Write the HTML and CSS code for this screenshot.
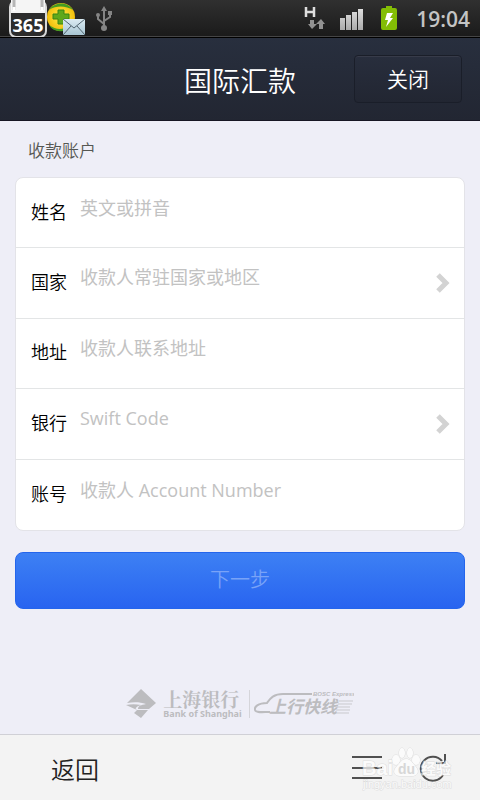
FILE: index.html
```html
<!DOCTYPE html>
<html lang="zh-CN">
<head>
<meta charset="utf-8">
<meta name="viewport" content="width=device-width, initial-scale=1">
<title>国际汇款</title>
<link rel="stylesheet" href="styles.css">
</head>
<body>
<div class="status">
  <svg class="notices" width="120" height="37" viewBox="0 0 120 37" aria-hidden="true">
    <defs>
      <linearGradient id="mail" x1="0" y1="0" x2="0" y2="1"><stop offset="0" stop-color="#dcebf2"/><stop offset="1" stop-color="#a9c6d4"/></linearGradient>
      <radialGradient id="ball"><stop offset="0" stop-color="#fff04a"/><stop offset="1" stop-color="#f2bd0c"/></radialGradient>
    </defs>
    <rect x="10" y="1" width="36" height="36" rx="6" fill="#2c2c2c" stroke="#d8d8d8" stroke-width="2"/>
    <path d="M11 0h34v13H11z" fill="#f5f5f5"/>
    <path d="M14 0v10M42 0v10" stroke="#b5b5b5" stroke-width="3"/>
    <path d="M14 7v4M42 7v4" stroke="#fff" stroke-width="3"/>
    <text x="28" y="32" class="calendar" text-anchor="middle">365</text>
    <circle cx="61" cy="17" r="14" fill="url(#ball)"/>
    <path d="M49 10C54 2 67 1 73 10C66 6 57 5 49 10zM49 25C55 29 59 30 65 28L63 31C57 32 52 30 49 25z" fill="#459d22"/>
    <path d="M58 10h6v4h5v5h-5v5h-6v-5h-5v-5h5z" fill="#5fa81b" stroke="#398415"/>
    <rect x="63" y="19" width="22" height="16" fill="url(#mail)"/>
    <path d="M63 19l11 9 11-9M63 35l8-9M85 35l-8-9" fill="none" stroke="#526570"/>
    <g fill="none" stroke="#858585" stroke-width="2"><path d="M104 29V9M104 24l-6-5v-4M104 21l6-4v-3"/></g>
    <g fill="#858585"><path d="M101 11l3-5 3 5z"/><circle cx="104" cy="28" r="3"/><circle cx="98" cy="15" r="2"/><path d="M108 11h4v4h-4z"/></g>
  </svg>
  <div class="system">
    <svg width="96" height="37" viewBox="302 0 96 37" aria-hidden="true">
      <defs><linearGradient id="bars" x1="0" y1="0" x2="0" y2="1"><stop offset="0" stop-color="#dedede"/><stop offset="1" stop-color="#aaa"/></linearGradient></defs>
      <path d="M306 7v10M314 7v10M306 12h8" stroke="#dedede" stroke-width="2.5"/>
      <path d="M310 20h4v4h3l-5 5-4-5h2zM319 29v-5h-3l5-5 4 5h-2v5z" fill="#929292"/>
      <path d="M340 18h5v12h-5zM346 15h5v15h-5zM352 12h5v18h-5zM358 9h5v21h-5z" fill="url(#bars)"/>
      <path d="M383 8h3V6h6v2h3q2 0 2 2v18q0 2-2 2h-12q-2 0-2-2V10q0-2 2-2z" fill="#83bd05"/>
      <path d="M387 13h6l-3 5h3l-7 9 2-7h-3z" fill="#fff"/>
    </svg>
    <time class="clock">19:04</time>
  </div>
</div>

<header class="header">
  <h1 class="title">国际汇款</h1>
  <button class="close" type="button">关闭</button>
</header>

<main class="main">
  <form class="form">
    <h2 class="section">收款账户</h2>
    <div class="card">
      <div class="row"><label class="label" for="name">姓名</label><input class="field" id="name" type="text" placeholder="英文或拼音"></div>
      <div class="row"><label class="label" for="country">国家</label>
        <select class="field" id="country"><option>收款人常驻国家或地区</option></select>
        <svg class="chevron" width="14" height="20" viewBox="0 0 14 20" aria-hidden="true"><path d="M2 2l8 8-8 8"/></svg></div>
      <div class="row"><label class="label" for="address">地址</label><input class="field" id="address" type="text" placeholder="收款人联系地址"></div>
      <div class="row"><label class="label" for="bank">银行</label>
        <select class="field" id="bank"><option>Swift Code</option></select>
        <svg class="chevron" width="14" height="20" viewBox="0 0 14 20" aria-hidden="true"><path d="M2 2l8 8-8 8"/></svg></div>
      <div class="row"><label class="label" for="account">账号</label><input class="field" id="account" type="text" placeholder="收款人 Account Number"></div>
    </div>
    <button class="next" type="button">下一步</button>
  </form>
  <div class="brand">
    <svg width="30" height="32" viewBox="0 0 30 32" aria-hidden="true"><path d="M15 1L30 15L23 21H12C12 18 15 17 20 16C14 14 8 14 1 15zM0 17C5 16 10 16 15 17C11 18 9 20 10 22H22L15 30L8 25L11 22z"/></svg>
    <div class="bank"><span class="bank-cn">上海银行</span><span class="bank-en">Bank of Shanghai</span></div>
    <svg class="express" width="100" height="28" viewBox="0 0 100 28" role="img" aria-label="上行快线 BOSC Express">
      <path d="M58 4H29C19 4 16 9 13 13C4 13 0 17 1 20C2 23 8 22 16 22" class="train"/>
      <path d="M85 11h14M84 14h14M83 17h13M82 20h14M80 23h15" class="speed"/>
      <text x="15" y="23" class="express-cn">上行快线</text>
      <text x="59" y="6" class="express-en">BOSC Express</text>
    </svg>
  </div>
</main>

<footer class="toolbar">
  <button class="back" type="button">返回</button>
  <div class="tools">
    <button class="tool" type="button" aria-label="菜单"><svg width="30" height="30" viewBox="0 0 30 30"><path d="M0 4h30M0 15h30M0 25h30"/></svg></button>
    <button class="tool" type="button" aria-label="刷新"><svg width="30" height="30" viewBox="0 0 30 30"><path d="M25 8A12 12 0 1 0 26 22M28 1v9h-9"/></svg></button>
  </div>
  <svg class="watermark" width="92" height="46" viewBox="0 0 92 46" aria-hidden="true">
    <g class="paw"><ellipse cx="34" cy="15" rx="4" ry="5"/><ellipse cx="40" cy="8" rx="3" ry="5"/><ellipse cx="48" cy="8" rx="3" ry="5"/><ellipse cx="54" cy="15" rx="4" ry="5"/><path d="M44 14c5 0 7 5 10 8 4 5 1 9-4 9H38c-6 0-8-5-3-10 3-3 5-7 9-7z"/></g>
    <text x="0" y="30" class="mark-main">Bai</text>
    <text x="36" y="29" class="mark-du">du</text>
    <text x="59" y="29" class="mark-cn">经验</text>
    <text x="1" y="43" class="mark-url">jingyan.baidu.com</text>
  </svg>
</footer>
</body>
</html>
```
FILE: styles.css
```css
* { box-sizing: border-box; }

body {
  margin: 0;
  min-height: 100vh;
  display: flex;
  flex-direction: column;
  background: #eeeef7;
  color: #000;
  font-family: "Noto Sans CJK SC", sans-serif;
  font-size: 18px;
  font-weight: 350;
}

button, input, select {
  margin: 0;
  border: 0;
  padding: 0;
  background: none;
  font: inherit;
  color: inherit;
}

.status {
  display: flex;
  justify-content: space-between;
  height: 38px;
  background: linear-gradient(#303030, #1a1a1a);
  border-bottom: 1px solid #000;
  box-shadow: inset 0 -1px #454545;
}
.system { display: flex; align-items: center; gap: 18px; padding-right: 10px; }
.clock {
  color: #c4c4c4;
  font: 600 21px/38px "Open Sans", sans-serif;
}
.calendar { font: bold 18px "Open Sans", sans-serif; fill: #fff; }

.header {
  display: grid;
  grid-template-columns: 1fr auto 1fr;
  align-items: center;
  height: 83px;
  padding: 0 18px;
  background: linear-gradient(#282f3e, #222632);
  border-bottom: 1px solid #171624;
  color: #fff;
}
.title {
  grid-column: 2;
  margin: 0;
  padding-top: 2px;
  font-size: 28px;
  line-height: 40px;
  font-weight: inherit;
}
.close {
  justify-self: end;
  width: 108px;
  height: 48px;
  padding-bottom: 2px;
  border: 1px solid #1a1e29;
  border-radius: 4px;
  background: linear-gradient(#282e3d, #222632);
  box-shadow: inset 0 1px #373b49;
  font-size: 21px;
  line-height: 32px;
}

.main {
  flex: 1;
  display: flex;
  flex-direction: column;
  justify-content: space-between;
  padding: 16px 15px 14px;
}
.section {
  margin: 0 0 14px 13px;
  color: #555752;
  font-size: 17px;
  line-height: 26px;
  font-weight: inherit;
}
.card {
  display: grid;
  grid-auto-rows: 1fr;
  min-height: 354px;
  border: 1px solid #e3e3e8;
  border-radius: 8px;
  background: #fff;
}
.row {
  display: flex;
  align-items: center;
  gap: 13px;
  padding: 0 14px 0 15px;
  border-bottom: 1px solid #e3e5e6;
}
.row:last-child { border-bottom: 0; }
.label { padding-bottom: 4px; }
.field {
  flex: 1;
  min-width: 0;
  height: 40px;
  padding-bottom: 10px;
  appearance: none;
  outline: 0;
  color: #c2c2c2;
  font-family: "Open Sans", "Noto Sans CJK SC", sans-serif;
  font-weight: 400;
}
select.field { padding-bottom: 12px; }
.field::placeholder { color: #c2c2c2; opacity: 1; }
.chevron { fill: none; stroke: #d3d3d3; stroke-width: 5px; }

.next {
  display: block;
  width: 100%;
  height: 57px;
  margin-top: 21px;
  padding-bottom: 3px;
  border: 1px solid #2465ec;
  border-radius: 8px;
  background: linear-gradient(#3d80f4, #2864f0);
  color: #79a3f7;
  font-size: 20px;
  line-height: 30px;
}

.brand {
  display: flex;
  align-items: center;
  justify-content: center;
  gap: 7px;
  fill: #bcbcbf;
  color: #bcbcbf;
}
.bank { display: flex; flex-direction: column; }
.bank-cn {
  font: bold 19px/20px "Noto Serif CJK SC", "Noto Sans CJK SC", serif;
}
.bank-en { font: bold 9px/10px "Noto Sans", sans-serif; }
.express { border-left: 1px solid #d5d5da; padding-left: 4px; width: 105px; }
.train { fill: none; stroke: #bcbcbf; stroke-width: 2px; }
.speed { stroke: #c9c9cd; stroke-width: 1px; }
.express-cn { font: italic bold 17px "Noto Sans CJK SC", sans-serif; }
.express-en { font: italic bold 6px "Liberation Sans", sans-serif; }

.toolbar {
  position: relative;
  display: flex;
  align-items: center;
  justify-content: space-between;
  height: 66px;
  padding: 0 33px 0 51px;
  border-top: 1px solid #d0d0d6;
  background: #f3f3f3;
}
.back { color: #222; font-size: 24px; line-height: 36px; padding-top: 2px; }
.tools { display: flex; gap: 35px; }
.tool { display: flex; }
.tool svg { fill: none; stroke: #505050; stroke-width: 2px; }

.watermark {
  position: absolute;
  right: 26px;
  bottom: 9px;
  pointer-events: none;
  fill: #fff;
  stroke: #d4d4d4;
  stroke-width: 1px;
  paint-order: stroke;
  opacity: 0.7;
}
.mark-main { font: bold 20px "Liberation Sans", sans-serif; }
.mark-du { font: bold 14px "Liberation Sans", sans-serif; fill: #ccc; stroke: none; }
.mark-cn { font: bold 15px "Noto Sans CJK SC", sans-serif; }
.mark-url { font: 11px "Liberation Sans", sans-serif; }
```
